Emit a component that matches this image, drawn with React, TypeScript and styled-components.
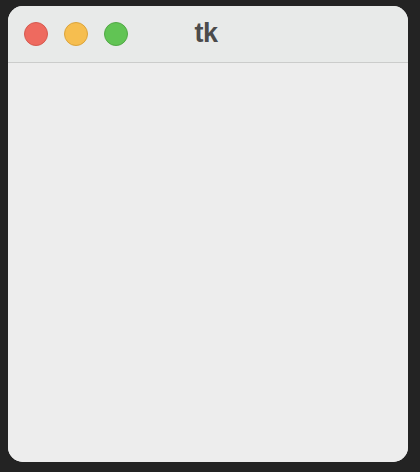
import styled, { createGlobalStyle } from "styled-components"

const GlobalStyle = createGlobalStyle`
    html, body {
        margin: 0;
        padding: 0;
        background: #232323;
    }
    body {
        font-family: "Liberation Sans", Arial, sans-serif;
    }
`
const Desktop = styled.div`
    width: 420px;
    height: 472px;
    padding: 6px 0 0 8px;
    box-sizing: border-box;
`
const Window = styled.div`
    width: 400px;
    height: 456px;
    display: flex;
    flex-direction: column;
    background: #ededed;
    border-radius: 15px;
    overflow: hidden;
`
const TitleBar = styled.div`
    position: relative;
    height: 56px;
    flex-shrink: 0;
    display: flex;
    align-items: center;
    gap: 16px;
    padding-left: 16px;
    background: #e8eae9;
    border-bottom: 1px solid #cbcccb;
`
const Light = styled.span<{ $fill: string; $ring: string }>`
    width: 22px;
    height: 22px;
    border-radius: 50%;
    background: ${p => p.$fill};
    border: 1px solid ${p => p.$ring};
    box-sizing: content-box;
`
const Title = styled.div`
    position: absolute;
    left: 0;
    right: 4px;
    top: 0;
    bottom: 2px;
    display: flex;
    align-items: center;
    justify-content: center;
    font-size: 27px;
    font-weight: bold;
    letter-spacing: -0.5px;
    color: #4b4b4b;
    pointer-events: none;
`
const Content = styled.div`
    flex: 1;
    background: #ededed;
`

function App() {
    return (
        <Desktop>
            <GlobalStyle />
            <Window>
                <TitleBar>
                    <Light $fill="#ee6a5f" $ring="#d55a50" />
                    <Light $fill="#f6be4f" $ring="#dba43c" />
                    <Light $fill="#61c454" $ring="#52a846" />
                    <Title>tk</Title>
                </TitleBar>
                <Content />
            </Window>
        </Desktop>
    )
}

export default App
